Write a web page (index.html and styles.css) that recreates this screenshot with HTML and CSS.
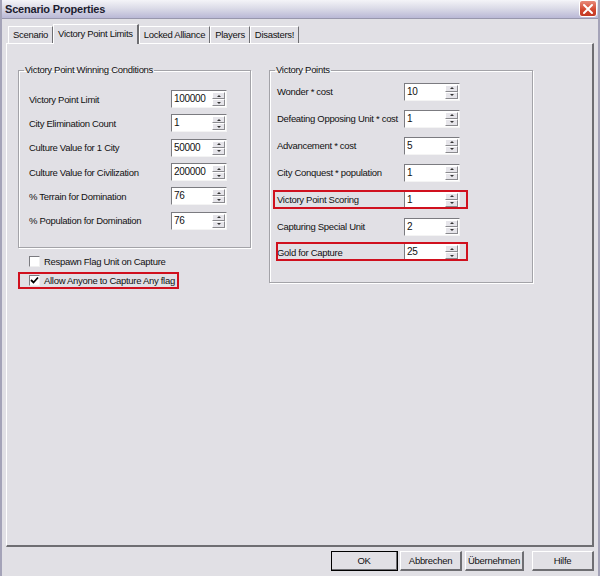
FILE: index.html
```html
<!DOCTYPE html>
<html>
<head>
<meta charset="utf-8">
<link rel="stylesheet" href="styles.css">
</head>
<body>
<div class="window">
  <div class="titlebar">
    <span class="title">Scenario Properties</span>
    <span class="close"><svg width="12" height="12" viewBox="0 0 12 12"><path d="M2 2L10 10M10 2L2 10" stroke="#fff" stroke-width="2" stroke-linecap="round"/></svg></span>
  </div>
  <div class="body">
    <div class="tabs">
      <div class="tab first">Scenario</div>
      <div class="tab active">Victory Point Limits</div>
      <div class="tab">Locked Alliance</div>
      <div class="tab">Players</div>
      <div class="tab">Disasters!</div>
    </div>
    <div class="panel">
      <div class="leftcol">
        <fieldset class="group gleft">
          <legend>Victory Point Winning Conditions</legend>
          <div class="row"><span class="lbl">Victory Point Limit</span><span class="spin"><span class="val">100000</span><span class="btns"><i class="up"></i><i class="dn"></i></span></span></div>
          <div class="row"><span class="lbl">City Elimination Count</span><span class="spin"><span class="val">1</span><span class="btns"><i class="up"></i><i class="dn"></i></span></span></div>
          <div class="row"><span class="lbl">Culture Value for 1 City</span><span class="spin"><span class="val">50000</span><span class="btns"><i class="up"></i><i class="dn"></i></span></span></div>
          <div class="row"><span class="lbl">Culture Value for Civilization</span><span class="spin"><span class="val">200000</span><span class="btns"><i class="up"></i><i class="dn"></i></span></span></div>
          <div class="row"><span class="lbl">% Terrain for Domination</span><span class="spin"><span class="val">76</span><span class="btns"><i class="up"></i><i class="dn"></i></span></span></div>
          <div class="row"><span class="lbl">% Population for Domination</span><span class="spin"><span class="val">76</span><span class="btns"><i class="up"></i><i class="dn"></i></span></span></div>
        </fieldset>
        <div class="check first-check"><span class="box"></span><span>Respawn Flag Unit on Capture</span></div>
        <div class="check hl-check"><span class="box"><svg width="9" height="9" viewBox="0 0 9 9"><path d="M1 4L3.5 6.5L8 1.5" stroke="#000" stroke-width="1.8" fill="none"/></svg></span><span>Allow Anyone to Capture Any flag</span></div>
      </div>
      <fieldset class="group gright">
        <legend>Victory Points</legend>
        <div class="row r2"><span class="lbl">Wonder * cost</span><span class="spin"><span class="val">10</span><span class="btns"><i class="up"></i><i class="dn"></i></span></span></div>
        <div class="row r2"><span class="lbl">Defeating Opposing Unit * cost</span><span class="spin"><span class="val">1</span><span class="btns"><i class="up"></i><i class="dn"></i></span></span></div>
        <div class="row r2"><span class="lbl">Advancement * cost</span><span class="spin"><span class="val">5</span><span class="btns"><i class="up"></i><i class="dn"></i></span></span></div>
        <div class="row r2"><span class="lbl">City Conquest * population</span><span class="spin"><span class="val">1</span><span class="btns"><i class="up"></i><i class="dn"></i></span></span></div>
        <div class="row r2 hl hl-a"><span class="lbl">Victory Point Scoring</span><span class="spin"><span class="val">1</span><span class="btns"><i class="up"></i><i class="dn"></i></span></span></div>
        <div class="row r2"><span class="lbl">Capturing Special Unit</span><span class="spin"><span class="val">2</span><span class="btns"><i class="up"></i><i class="dn"></i></span></span></div>
        <div class="row r2 tight hl hl-b"><span class="lbl">Gold for Capture</span><span class="spin"><span class="val">25</span><span class="btns"><i class="up"></i><i class="dn"></i></span></span></div>
      </fieldset>
    </div>
    <div class="buttons">
      <div class="btn default">OK</div>
      <div class="btn b2">Abbrechen</div>
      <div class="btn b3">Übernehmen</div>
      <div class="btn b4">Hilfe</div>
    </div>
  </div>
</div>
</body>
</html>
```
FILE: styles.css
```css
* { box-sizing: border-box; }
html, body { margin: 0; padding: 0; }
body {
  width: 600px; height: 576px; overflow: hidden;
  font-family: "Liberation Sans", Arial, sans-serif;
  font-size: 9.5px; letter-spacing: -0.3px; color: #111;
  background: #e1e0e5;
}
.window {
  width: 600px; height: 576px;
  background: #e1e0e5;
  border-left: 2px solid #a4a3b8;
  border-right: 2px solid #a4a3b8;
  display: flex; flex-direction: column;
}
.titlebar {
  height: 19px;
  background: linear-gradient(#f4f4f8, #dcdce8 45%, #b9b8d6);
  border-bottom: 1px solid #9897ad;
  display: flex; align-items: center; justify-content: space-between;
  padding-left: 3px; padding-right: 1px;
}
.title { font-weight: bold; font-size: 11px; letter-spacing: -0.2px; color: #1c1c30; }
.close {
  width: 18px; height: 17px; margin-top: -1px;
  background: linear-gradient(#e88a7a, #d2452e 60%, #c23a26);
  border: 1px solid #fff; border-radius: 3px;
  display: flex; align-items: center; justify-content: center;
}
.body { flex: 1; display: flex; flex-direction: column; padding: 5px 4px 0 4px; }
.tabs { display: flex; align-items: flex-end; height: 19px; padding-left: 2px; position: relative; z-index: 1; }
.tab {
  height: 17px; padding: 0 4px; line-height: 16px;
  border-top: 1px solid #fff; border-left: 1px solid #fff;
  border-right: 1px solid #6e6e72;
  background: #e1e0e5; white-space: nowrap;
}
.tab.active {
  height: 20px; margin-bottom: -1px; padding: 0 4px; line-height: 17px;
  border-right: 2px solid #6e6e72;
}
.panel {
  height: 504px;
  border-top: 1px solid #fff; border-left: 1px solid #fff;
  border-right: 2px solid #6e6e72; border-bottom: 2px solid #6e6e72;
  display: flex; align-items: flex-start;
  padding: 20px 0 0 11px; gap: 18px;
}
.leftcol { width: 233px; display: flex; flex-direction: column; }
.group {
  margin: 0; border: 1px solid #a3a3a8;
  box-shadow: 1px 1px 0 #fff, inset 1px 1px 0 #fff;
}
.group legend { padding: 0 1px; line-height: 12px; }
.gleft { width: 233px; height: 184px; padding: 11px 0 0 10px; }
.gleft legend { margin-left: -5px; }
.gright { width: 264px; height: 219px; padding: 2px 0 0 7px; }
.gright legend { margin-left: -2px; }
.row { display: flex; align-items: center; height: 24.3px; position: relative; }
.row.r2 { height: 27px; }
.row.r2.tight { height: 24px; }
.lbl { width: 142px; white-space: nowrap; }
.gright .lbl { width: 127px; }
.spin {
  width: 56px; height: 18px;
  background: #fff;
  border-top: 1px solid #7b7b80; border-left: 1px solid #7b7b80;
  border-right: 1px solid #f4f4f4; border-bottom: 1px solid #f4f4f4;
  display: flex; align-items: stretch;
}
.val { flex: 1; padding-left: 2px; line-height: 16px; font-size: 10px; }
.btns { width: 14px; display: flex; flex-direction: column; padding: 1px 1px 1px 0; }
.btns i {
  flex: 1; background: #e6e5ea;
  border-top: 1px solid #fff; border-left: 1px solid #fff;
  border-right: 1px solid #8a8a8e; border-bottom: 1px solid #8a8a8e;
  display: flex; align-items: center; justify-content: center;
}
.btns i::after {
  content: ""; width: 0; height: 0;
  border-left: 2px solid transparent; border-right: 2px solid transparent;
}
.btns i.up::after { border-bottom: 2px solid #333; }
.btns i.dn::after { border-top: 2px solid #333; }
.check { display: flex; align-items: center; gap: 4px; height: 16px; margin-left: 11px; white-space: nowrap; }
.first-check { margin-top: 5px; }
.check + .check { margin-top: 5px; }
.box {
  width: 11px; height: 11px; background: #fff; flex: none;
  border-top: 1px solid #7b7b80; border-left: 1px solid #7b7b80;
  border-right: 1px solid #f0f0f0; border-bottom: 1px solid #f0f0f0;
  display: flex; align-items: center; justify-content: center;
}
.hl-check { border: 2px solid #d0101e; margin-left: 0; padding-left: 9px; width: 161px; height: 17px; margin-top: 3px !important; }
.hl::before {
  content: ""; position: absolute; top: 4px; bottom: 4px;
  border: 2px solid #d0101e; pointer-events: none;
}
.hl-a::before { left: -4px; width: 191px; }
.hl.tight::before { top: 2px; bottom: 3px; left: -1px; width: 188px; }
.buttons { display: flex; justify-content: flex-end; padding-top: 4px; }
.btn {
  width: 62px; height: 20px; line-height: 17px; text-align: center;
  background: #e1e0e5;
  border-top: 1px solid #fff; border-left: 1px solid #fff;
  border-right: 2px solid #6e6e72; border-bottom: 2px solid #6e6e72;
}
.btn.default { width: 67px; outline: 1px solid #000; outline-offset: -1px; }
.b2 { margin-left: 2px; }
.b3 { margin-left: 3px; width: 59px; }
.b4 { margin-left: 8px; }
```
